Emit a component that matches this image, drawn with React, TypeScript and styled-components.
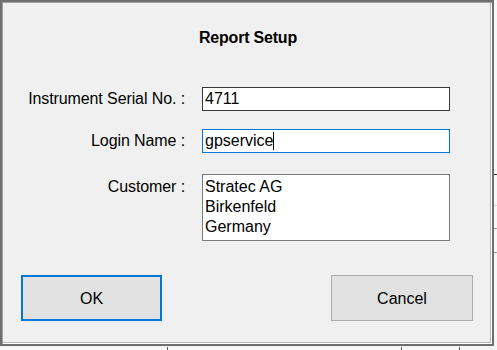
import React from "react";
import styled, { createGlobalStyle } from "styled-components";

const Global = createGlobalStyle`
  html, body { margin: 0; padding: 0; background: #f0f0f0; }
  body { font-family: "Liberation Sans", Arial, sans-serif; }
`;

const Screen = styled.div`
  position: relative;
  width: 497px;
  height: 350px;
  overflow: hidden;
  background: #f0f0f0;
`;

/* ---- application behind the dialog ---- */
const Sheet = styled.div`
  display: flex;
  flex-direction: column;
  height: 350px;
`;

const SheetTop = styled.div`
  display: flex;
  height: 347px;
`;

const SheetSpacer = styled.div`
  flex: 1;
`;

const SideList = styled.div`
  width: 37px;
  display: flex;
  flex-direction: column;
  background: #f7f7f7;
`;

const SideRow = styled.div<{ $h: number; $line: string }>`
  height: ${(p) => p.$h}px;
  box-sizing: border-box;
  border-bottom: 1px solid ${(p) => p.$line};
`;

const SheetBottom = styled.div`
  display: grid;
  grid-template-columns: 168px 234px 58px 1fr;
  flex: 1;
  background: #f7f7f7;
`;

const SheetCell = styled.div<{ $last?: boolean }>`
  box-sizing: border-box;
  border-right: ${(p) => (p.$last ? "none" : "1px solid #5a5a5a")};
`;

/* ---- dialog ---- */
const Dialog = styled.div`
  position: absolute;
  top: 0;
  left: 0;
  width: 494px;
  height: 346px;
  box-sizing: border-box;
  background: #f0f0f0;
  border: 2px solid #6f6f6f;
  box-shadow: inset 1px 1px 0 #a0a0a0, inset -1px -1px 0 #ffffff,
    inset -2px -2px 0 #b9b9b9;
  display: flex;
  flex-direction: column;
  color: #000;
`;

const Title = styled.div`
  margin-top: 27px;
  padding-left: 2px;
  text-align: center;
  font-weight: bold;
  font-size: 16px;
  letter-spacing: -0.2px;
  line-height: 18px;
`;

const Form = styled.div`
  margin-top: 40px;
  display: grid;
  grid-template-columns: 183px 248px;
  column-gap: 17px;
  align-items: center;
`;

const Label = styled.div<{ $top?: number; $start?: boolean }>`
  text-align: right;
  font-size: 16px;
  letter-spacing: -0.1px;
  line-height: 20px;
  margin-top: ${(p) => p.$top ?? 0}px;
  align-self: ${(p) => (p.$start ? "start" : "center")};
  padding-top: ${(p) => (p.$start ? 3 : 0)}px;
`;

const Field = styled.div<{ $tone: "dark" | "focus"; $top?: number }>`
  box-sizing: border-box;
  height: 24px;
  margin-top: ${(p) => p.$top ?? 0}px;
  border: 1px solid ${(p) => (p.$tone === "focus" ? "#0078d7" : "#3a3a3a")};
  background: #ffffff;
  padding: 0 2px;
  font-size: 16px;
  line-height: 22px;
  white-space: nowrap;
`;

const Caret = styled.span`
  display: inline-block;
  width: 1px;
  height: 18px;
  background: #000;
  vertical-align: -4px;
`;

const MultiField = styled.div<{ $top?: number }>`
  box-sizing: border-box;
  height: 67px;
  margin-top: ${(p) => p.$top ?? 0}px;
  border: 1px solid #7a7a7a;
  background: #ffffff;
  padding: 2px 2px;
  font-size: 16px;
  line-height: 20px;
`;

const Footer = styled.div`
  margin-top: 34px;
  padding: 0 19px;
  display: flex;
  justify-content: space-between;
`;

const Button = styled.div<{ $primary?: boolean }>`
  box-sizing: border-box;
  width: ${(p) => (p.$primary ? 141 : 142)}px;
  height: 46px;
  padding-top: 1px;
  display: flex;
  align-items: center;
  justify-content: center;
  background: #e1e1e1;
  border: ${(p) => (p.$primary ? "2px solid #0078d7" : "1px solid #adadad")};
  font-size: 16px;
  cursor: default;
`;

export default function App() {
  return (
    <>
      <Global />
      <Screen>
        <Sheet>
          <SheetTop>
            <SheetSpacer />
            <SideList>
              <SideRow $h={175} $line="#4a2a1a" />
              <SideRow $h={31} $line="#d8d8d8" />
              <SideRow $h={23} $line="#a0a0a0" />
              <SideRow $h={24} $line="#a0a0a0" />
            </SideList>
          </SheetTop>
          <SheetBottom>
            <SheetCell />
            <SheetCell />
            <SheetCell />
            <SheetCell $last />
          </SheetBottom>
        </Sheet>

        <Dialog>
          <Title>Report Setup</Title>
          <Form>
            <Label>Instrument Serial No. :</Label>
            <Field $tone="dark">4711</Field>

            <Label $top={18}>Login Name :</Label>
            <Field $tone="focus" $top={18}>
              gpservice
              <Caret />
            </Field>

            <Label $top={21} $start>
              Customer :
            </Label>
            <MultiField $top={21}>
              Stratec AG
              <br />
              Birkenfeld
              <br />
              Germany
            </MultiField>
          </Form>
          <Footer>
            <Button $primary>OK</Button>
            <Button>Cancel</Button>
          </Footer>
        </Dialog>
      </Screen>
    </>
  );
}
